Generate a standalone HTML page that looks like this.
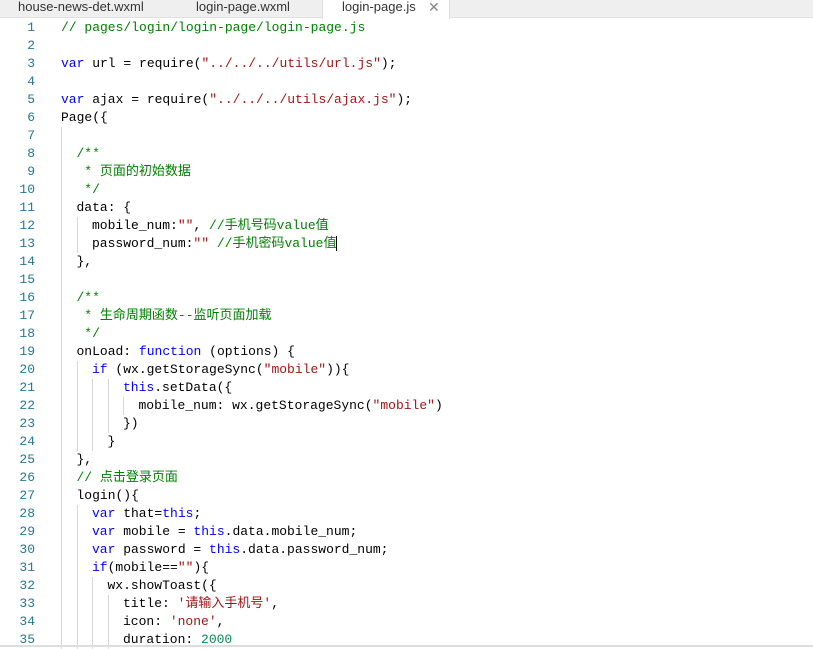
<!DOCTYPE html>
<html><head><meta charset="utf-8"><style>
body{margin:0;width:813px;height:647px;overflow:hidden;background:#fff;position:relative}
.tabs{position:absolute;left:0;top:0;width:813px;height:18px;background:#efefef;border-bottom:1px solid #e2e2e2;box-sizing:border-box;font:13px "Liberation Sans",sans-serif;color:#333}
.tab{position:absolute;top:0;height:18px;line-height:14px}
.act{position:absolute;left:322px;top:0;width:128px;height:19px;background:#fff;border-left:1px solid #ddd;border-right:1px solid #ddd;box-sizing:border-box}
.code{position:absolute;left:0;top:19px;width:813px;font:13px "Liberation Mono","Noto Sans CJK SC",monospace;font-weight:normal}
.l{height:18px;line-height:18px;position:relative;white-space:pre;color:#000}
.n{position:absolute;left:0;width:35px;text-align:right;color:#237893}
.t{position:absolute;left:61px}
.g{display:inline-block;width:15.5px;height:18px;vertical-align:top;border-left:1px solid #d6d6d6;box-sizing:border-box}
.c{color:#008000}.k{color:#0000ff}.s{color:#a31515}.m{color:#098658}
.bot{position:absolute;left:0;top:645px;width:813px;height:2px;background:#ddd}
</style></head><body>
<div class="tabs">
<span class="tab" style="left:18px">house-news-det.wxml</span>
<span class="tab" style="left:196px">login-page.wxml</span>
<div class="act"></div>
<span class="tab" style="left:342px">login-page.js</span>
<span class="tab" style="left:428px;color:#888;font-size:14px">✕</span>
</div>
<div class="code">
<div class="l"><span class="n">1</span><span class="t"><span class="c">// pages/login/login-page/login-page.js</span></span></div>
<div class="l"><span class="n">2</span></div>
<div class="l"><span class="n">3</span><span class="t"><span class="k">var</span> url = require(<span class="s">"../../../utils/url.js"</span>);</span></div>
<div class="l"><span class="n">4</span></div>
<div class="l"><span class="n">5</span><span class="t"><span class="k">var</span> ajax = require(<span class="s">"../../../utils/ajax.js"</span>);</span></div>
<div class="l"><span class="n">6</span><span class="t">Page({</span></div>
<div class="l"><span class="n">7</span><span class="t"><span class="g"></span></span></div>
<div class="l"><span class="n">8</span><span class="t"><span class="g"></span><span class="c">/**</span></span></div>
<div class="l"><span class="n">9</span><span class="t"><span class="g"></span><span class="c"> * 页面的初始数据</span></span></div>
<div class="l"><span class="n">10</span><span class="t"><span class="g"></span><span class="c"> */</span></span></div>
<div class="l"><span class="n">11</span><span class="t"><span class="g"></span>data: {</span></div>
<div class="l"><span class="n">12</span><span class="t"><span class="g"></span><span class="g"></span>mobile_num:<span class="s">""</span>, <span class="c">//手机号码value值</span></span></div>
<div class="l"><span class="n">13</span><span class="t"><span class="g"></span><span class="g"></span>password_num:<span class="s">""</span> <span class="c">//手机密码value值</span><span style="border-left:1px solid #000"></span></span></div>
<div class="l"><span class="n">14</span><span class="t"><span class="g"></span>},</span></div>
<div class="l"><span class="n">15</span><span class="t"><span class="g"></span></span></div>
<div class="l"><span class="n">16</span><span class="t"><span class="g"></span><span class="c">/**</span></span></div>
<div class="l"><span class="n">17</span><span class="t"><span class="g"></span><span class="c"> * 生命周期函数--监听页面加载</span></span></div>
<div class="l"><span class="n">18</span><span class="t"><span class="g"></span><span class="c"> */</span></span></div>
<div class="l"><span class="n">19</span><span class="t"><span class="g"></span>onLoad: <span class="k">function</span> (options) {</span></div>
<div class="l"><span class="n">20</span><span class="t"><span class="g"></span><span class="g"></span><span class="k">if</span> (wx.getStorageSync(<span class="s">"mobile"</span>)){</span></div>
<div class="l"><span class="n">21</span><span class="t"><span class="g"></span><span class="g"></span><span class="g"></span><span class="g"></span><span class="k">this</span>.setData({</span></div>
<div class="l"><span class="n">22</span><span class="t"><span class="g"></span><span class="g"></span><span class="g"></span><span class="g"></span><span class="g"></span>mobile_num: wx.getStorageSync(<span class="s">"mobile"</span>)</span></div>
<div class="l"><span class="n">23</span><span class="t"><span class="g"></span><span class="g"></span><span class="g"></span><span class="g"></span>})</span></div>
<div class="l"><span class="n">24</span><span class="t"><span class="g"></span><span class="g"></span><span class="g"></span>}</span></div>
<div class="l"><span class="n">25</span><span class="t"><span class="g"></span>},</span></div>
<div class="l"><span class="n">26</span><span class="t"><span class="g"></span><span class="c">// 点击登录页面</span></span></div>
<div class="l"><span class="n">27</span><span class="t"><span class="g"></span>login(){</span></div>
<div class="l"><span class="n">28</span><span class="t"><span class="g"></span><span class="g"></span><span class="k">var</span> that=<span class="k">this</span>;</span></div>
<div class="l"><span class="n">29</span><span class="t"><span class="g"></span><span class="g"></span><span class="k">var</span> mobile = <span class="k">this</span>.data.mobile_num;</span></div>
<div class="l"><span class="n">30</span><span class="t"><span class="g"></span><span class="g"></span><span class="k">var</span> password = <span class="k">this</span>.data.password_num;</span></div>
<div class="l"><span class="n">31</span><span class="t"><span class="g"></span><span class="g"></span><span class="k">if</span>(mobile==<span class="s">""</span>){</span></div>
<div class="l"><span class="n">32</span><span class="t"><span class="g"></span><span class="g"></span><span class="g"></span>wx.showToast({</span></div>
<div class="l"><span class="n">33</span><span class="t"><span class="g"></span><span class="g"></span><span class="g"></span><span class="g"></span>title: <span class="s">'请输入手机号'</span>,</span></div>
<div class="l"><span class="n">34</span><span class="t"><span class="g"></span><span class="g"></span><span class="g"></span><span class="g"></span>icon: <span class="s">'none'</span>,</span></div>
<div class="l"><span class="n">35</span><span class="t"><span class="g"></span><span class="g"></span><span class="g"></span><span class="g"></span>duration: <span class="m">2000</span></span></div>
</div>
<div class="bot"></div>
</body></html>
